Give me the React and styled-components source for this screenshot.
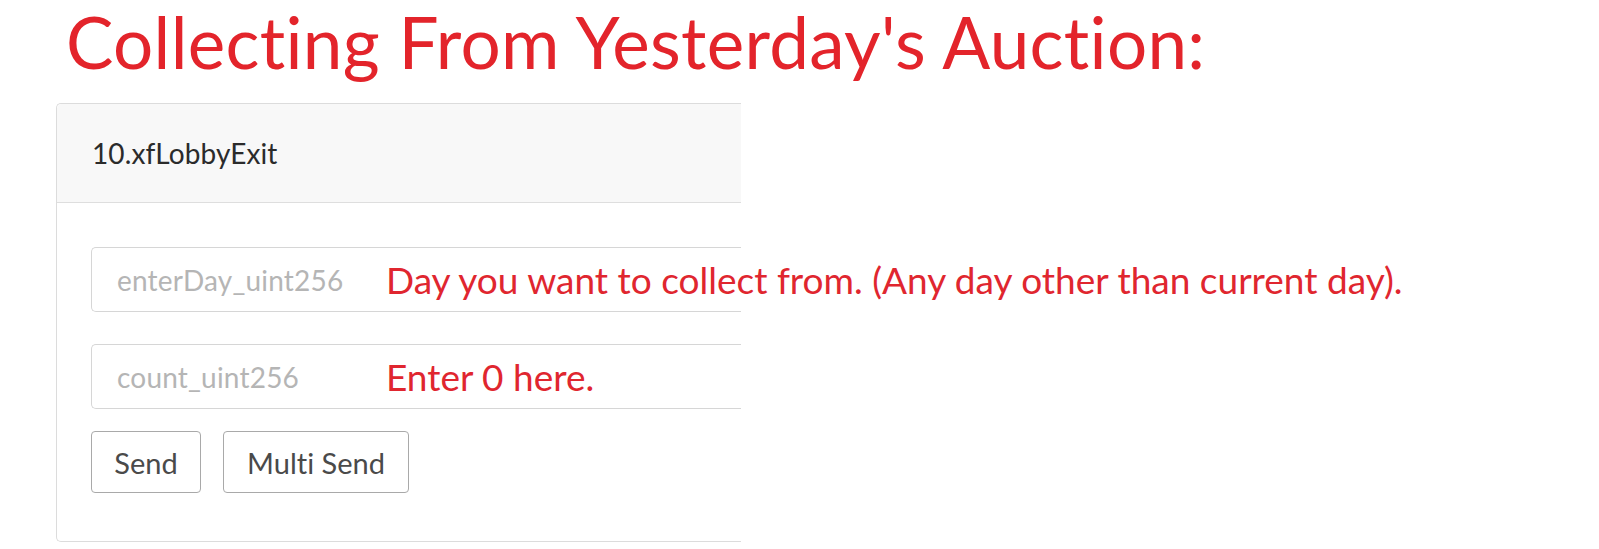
import React from 'react';
import styled, { createGlobalStyle } from 'styled-components';

const GlobalStyle = createGlobalStyle`
  body {
    margin: 0;
    background: #fff;
    font-family: Lato, "Open Sans", sans-serif;
    font-variant-ligatures: none;
  }
`;

const Page = styled.div`
  width: 1599px;
  height: 549px;
  overflow: hidden;
  padding-left: 56px;
  box-sizing: border-box;
`;

const Title = styled.h1`
  margin: 0 0 0 10px;
  height: 103px;
  padding-top: 2px;
  box-sizing: border-box;
  font-size: 71px;
  font-weight: 400;
  line-height: 80px;
  letter-spacing: 0.3px;
  color: #e3242b;
  white-space: nowrap;
`;

const Panel = styled.section`
  width: 685px;
  height: 439px;
  box-sizing: border-box;
  border: 1px solid #dcdcdc;
  border-right: none;
  border-radius: 5px 0 0 5px;
`;

const PanelHeader = styled.header`
  height: 99px;
  box-sizing: border-box;
  background: #f8f8f8;
  border-bottom: 1px solid #dedede;
  border-radius: 5px 0 0 0;
  display: flex;
  align-items: center;
  padding-left: 35px;
  font-size: 28px;
  letter-spacing: 0.1px;
  color: #2b2b2b;
`;

const PanelBody = styled.div`
  padding: 44px 0 0 34px;
  display: flex;
  flex-direction: column;
`;

const Field = styled.div`
  height: 65px;
  box-sizing: border-box;
  border: 1px solid #d6d6d6;
  border-right: none;
  border-radius: 5px 0 0 5px;
  display: flex;
  align-items: center;
  padding-left: 25px;

  & + & {
    margin-top: 32px;
  }
`;

const Placeholder = styled.span`
  width: 269px;
  flex: none;
  font-size: 28px;
  letter-spacing: 0.2px;
  color: #b5b5b5;
`;

const Note = styled.span`
  white-space: nowrap;
  font-size: 37px;
  color: #e0262f;
`;

const Buttons = styled.div`
  display: flex;
  gap: 22px;
  margin-top: 22px;
`;

const Button = styled.button`
  height: 62px;
  width: ${(p) => p.$w}px;
  box-sizing: border-box;
  background: #fff;
  border: 1px solid #a9a9a9;
  border-radius: 4px;
  font-family: inherit;
  font-variant-ligatures: none;
  font-size: 29px;
  color: #4a4a4a;
  padding: 0;
`;

export default function App() {
  return (
    <Page>
      <GlobalStyle />
      <Title>Collecting From Yesterday's Auction:</Title>
      <Panel>
        <PanelHeader>10.xfLobbyExit</PanelHeader>
        <PanelBody>
          <Field>
            <Placeholder>enterDay_uint256</Placeholder>
            <Note>Day you want to collect from. (Any day other than current day).</Note>
          </Field>
          <Field>
            <Placeholder>count_uint256</Placeholder>
            <Note>Enter 0 here.</Note>
          </Field>
          <Buttons>
            <Button $w={110}>Send</Button>
            <Button $w={186}>Multi Send</Button>
          </Buttons>
        </PanelBody>
      </Panel>
    </Page>
  );
}
